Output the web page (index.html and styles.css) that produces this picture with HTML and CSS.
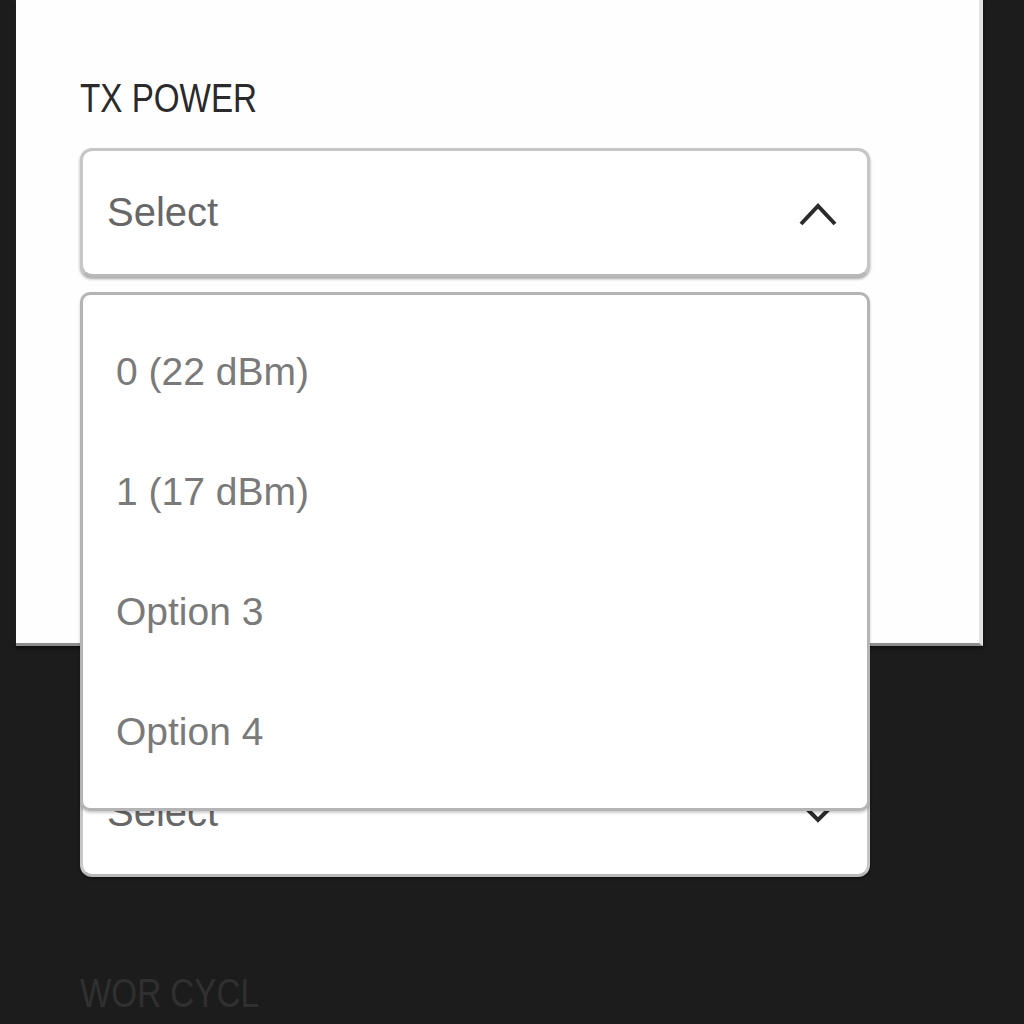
FILE: index.html
```html
<!DOCTYPE html>
<html>
<head>
<meta charset="utf-8">
<link rel="stylesheet" href="styles.css">
</head>
<body>
<div class="page">
  <section class="card">
    <div class="field">
      <div class="label"><span class="narrow">TX POWER</span></div>
      <div class="select">
        <span class="select-text">Select</span>
        <svg class="chev" width="40" height="28" viewBox="0 0 40 28"><path d="M3 25 L20 7 L37 25" fill="none" stroke="#2b2b2b" stroke-width="4"/></svg>
      </div>
      <ul class="menu">
        <li class="option">0 (22 dBm)</li>
        <li class="option">1 (17 dBm)</li>
        <li class="option">Option 3</li>
        <li class="option">Option 4</li>
      </ul>
    </div>
  </section>
  <div class="field field-next">
    <div class="label label-spacer"></div>
    <div class="select">
      <span class="select-text">Select</span>
      <svg class="chev" width="40" height="28" viewBox="0 0 40 28"><path d="M3 4 L20 21 L37 4" fill="none" stroke="#2b2b2b" stroke-width="4"/></svg>
    </div>
  </div>
  <div class="label label-dark label-last"><span class="narrow">WOR CYCL</span></div>
</div>
</body>
</html>
```

FILE: styles.css
```css
html, body {
  margin: 0;
  padding: 0;
  background: #1c1c1c;
}
body {
  height: 1024px;
  overflow: hidden;
  font-family: "Liberation Sans", Arial, sans-serif;
}
.page {
  display: flex;
  flex-direction: column;
}
.card {
  box-sizing: border-box;
  margin-left: 16px;
  width: 967px;
  height: 646px;
  background: #fefefe;
  border-right: 4px solid #e2e2e2;
  border-bottom: 3px solid #8c8c8c;
  box-shadow: 0 2px 4px rgba(0,0,0,0.6), -2px 0 2px rgba(255,255,255,0.05);
  padding: 78px 0 0 64px;
}
.field {
  position: relative;
  width: 790px;
  display: flex;
  flex-direction: column;
  gap: 30px;
}
.field-next {
  margin: 32px 0 0 80px;
}
.label {
  font-family: "Liberation Sans", sans-serif;
  font-size: 40px;
  line-height: 40px;
  height: 40px;
  color: #2a2a2a;
  white-space: nowrap;
}
.narrow {
  display: inline-block;
  transform: scaleX(0.83);
  transform-origin: left center;
}
.label-dark {
  color: #303030;
}
.label-last {
  margin: 96px 0 0 80px;
}
.select {
  box-sizing: border-box;
  height: 129px;
  background: #fff;
  border: 3px solid #c6c6c9;
  border-bottom-color: #b8b8bb;
  border-radius: 12px;
  box-shadow: 0 2px 3px rgba(0,0,0,0.35);
  display: flex;
  align-items: center;
  justify-content: space-between;
  padding: 0 29px 0 24px;
}
.select-text {
  font-size: 40px;
  color: #676767;
}
.chev {
  display: block;
}
.menu {
  position: absolute;
  left: 0;
  top: 214px;
  box-sizing: border-box;
  width: 790px;
  margin: 0;
  padding: 17px 0 16px 0;
  list-style: none;
  background: #fff;
  border: 3px solid #b4b4b6;
  border-radius: 10px;
  box-shadow: 0 2px 3px rgba(0,0,0,0.2);
  z-index: 2;
}
.option {
  height: 120px;
  display: flex;
  align-items: center;
  padding-left: 33px;
  font-size: 39px;
  color: #7a7a7a;
}
```
